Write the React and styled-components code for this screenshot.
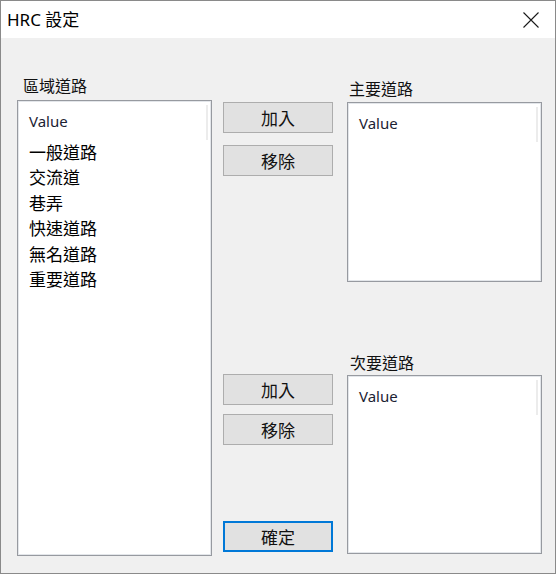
import React from 'react';
import styled, { createGlobalStyle } from 'styled-components';

const GlobalStyle = createGlobalStyle`
  html, body {
    margin: 0;
    padding: 0;
    background: #f0f0f0;
  }
  body {
    font-family: "Noto Sans", "Noto Sans CJK TC", sans-serif;
    color: #000;
  }
`;

const areaRoads = ['一般道路', '交流道', '巷弄', '快速道路', '無名道路', '重要道路'];

const App = () => (
  <>
    <GlobalStyle />
    <Window>
      <TitleBar>
        <Title>HRC 設定</Title>
        <CloseButton>
          <svg width="16" height="16" viewBox="0 0 16 16">
            <path d="M0.5 0.5 L15.5 15.5 M15.5 0.5 L0.5 15.5" stroke="#1a1a1a" strokeWidth="1.1" fill="none" />
          </svg>
        </CloseButton>
      </TitleBar>
      <Content>
        <LeftColumn>
          <GroupLabel indent={6}>區域道路</GroupLabel>
          <ListBox height={456}>
            <ListHeader>Value</ListHeader>
            {areaRoads.map(road => (
              <ListItem key={road}>{road}</ListItem>
            ))}
          </ListBox>
        </LeftColumn>

        <MiddleColumn>
          <ButtonGroup top={64} gap={12}>
            <Button>加入</Button>
            <Button>移除</Button>
          </ButtonGroup>
          <ButtonGroup top={198} gap={9}>
            <Button>加入</Button>
            <Button>移除</Button>
          </ButtonGroup>
          <Button primary style={{ marginTop: 76 }}>確定</Button>
        </MiddleColumn>

        <RightColumn>
          <Section top={40}>
            <GroupLabel indent={2}>主要道路</GroupLabel>
            <ListBox height={180} offset={4}>
              <ListHeader>Value</ListHeader>
            </ListBox>
          </Section>
          <Section top={70}>
            <GroupLabel indent={3}>次要道路</GroupLabel>
            <ListBox height={179} offset={3}>
              <ListHeader>Value</ListHeader>
            </ListBox>
          </Section>
        </RightColumn>
      </Content>
    </Window>
  </>
);

export default App;

const Window = styled.div`
  width: 556px;
  height: 574px;
  box-sizing: border-box;
  border: 1px solid #8a8a8a;
  display: flex;
  flex-direction: column;
  background: #f0f0f0;
  overflow: hidden;
`;

const TitleBar = styled.div`
  height: 37px;
  flex: none;
  background: #fff;
  display: flex;
  align-items: center;
  justify-content: space-between;
  padding: 0 0 0 6px;
`;

const Title = styled.div`
  font-size: 17px;
  line-height: 20px;
  margin-top: 1px;
  color: #000;
`;

const CloseButton = styled.div`
  width: 46px;
  height: 37px;
  display: flex;
  align-items: center;
  justify-content: center;
  padding-top: 1px;
  box-sizing: border-box;
  margin-right: 1px;
`;

const Content = styled.div`
  flex: 1;
  display: flex;
  padding-left: 16px;
`;

const LeftColumn = styled.div`
  width: 195px;
  padding-top: 37px;
`;

const MiddleColumn = styled.div`
  width: 110px;
  margin-left: 11px;
  display: flex;
  flex-direction: column;
`;

const RightColumn = styled.div`
  width: 195px;
  margin-left: 14px;
  display: flex;
  flex-direction: column;
`;

const Section = styled.div`
  margin-top: ${({ top }) => top}px;
`;

const GroupLabel = styled.div`
  font-family: "Noto Sans CJK TC", sans-serif;
  font-size: 16px;
  line-height: 20px;
  height: 20px;
  padding-left: ${({ indent }) => indent}px;
  color: #111;
`;

const ListBox = styled.div`
  position: relative;
  box-sizing: border-box;
  height: ${({ height }) => height}px;
  margin-top: ${({ offset }) => offset ?? 5}px;
  background: #fff;
  border: 1px solid #979aa0;
  box-shadow: inset 1px 1px 0 #e3e6ea, inset -1px -1px 0 #e3e6ea;
  padding: 9px 8px 0 11px;

  &::after {
    content: '';
    position: absolute;
    right: 3px;
    top: 4px;
    width: 2px;
    height: 35px;
    background: #ececec;
  }
`;

const ListHeader = styled.div`
  font-family: "Noto Sans", sans-serif;
  font-size: 15px;
  line-height: 22px;
  height: 22px;
  color: #1c2233;
  margin-bottom: 7px;
`;

const ListItem = styled.div`
  font-family: "Noto Sans CJK TC", sans-serif;
  font-size: 17px;
  line-height: 25.4px;
  color: #000;
`;

const ButtonGroup = styled.div`
  display: flex;
  flex-direction: column;
  gap: ${({ gap }) => gap}px;
  margin-top: ${({ top }) => top}px;
`;

const Button = styled.div`
  box-sizing: border-box;
  height: 31px;
  width: 110px;
  display: flex;
  align-items: center;
  justify-content: center;
  background: #e1e1e1;
  border: ${({ primary }) => (primary ? '2px solid #0078d7' : '1px solid #adadad')};
  font-family: "Noto Sans CJK TC", sans-serif;
  font-size: 17px;
  color: #111;
`;
